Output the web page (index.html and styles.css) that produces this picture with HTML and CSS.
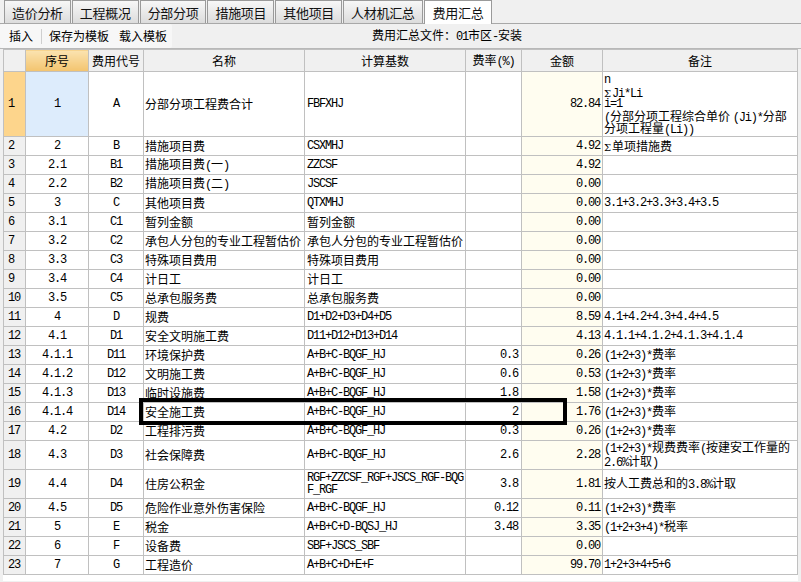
FILE: index.html
```html
<!DOCTYPE html>
<html lang="zh-CN">
<head>
<meta charset="utf-8">
<title>费用汇总</title>
<link rel="stylesheet" href="styles.css">
</head>
<body>
<div class="tabs">
  <div class="tab">造价分析</div>
  <div class="tab">工程概况</div>
  <div class="tab">分部分项</div>
  <div class="tab">措施项目</div>
  <div class="tab">其他项目</div>
  <div class="tab">人材机汇总</div>
  <div class="tab active">费用汇总</div>
</div>
<div class="toolbar">
  <div class="tools">
    <span>插入</span><span class="sep"></span><span>保存为模板</span><span class="gap">载入模板</span>
  </div>
  <div class="file">费用汇总文件：<span class="m">01</span>市区<span class="m">-</span>安装</div>
</div>
<div class="grid">
  <table>
    <colgroup>
      <col class="c0"><col class="c1"><col class="c2"><col class="c3"><col class="c4"><col class="c5"><col class="c6"><col class="c7">
    </colgroup>
    <thead>
      <tr>
        <th class="rh"></th>
        <th class="sel">序号</th>
        <th>费用代号</th>
        <th>名称</th>
        <th>计算基数</th>
        <th>费率<span class="m">(%)</span></th>
        <th>金额</th>
        <th>备注</th>
      </tr>
    </thead>
    <tbody>
      <tr class="r1">
        <td class="rh m cur">1</td><td class="ctr m blue">1</td><td class="ctr m">A</td><td class="nm">分部分项工程费合计</td><td class="fx m">FBFXHJ</td><td class="rt m"></td><td class="amt m">82.84</td>
        <td class="note note1"><div class="ln m">n</div><div class="ln"><span class="sig">Σ</span><span class="m">Ji*Li</span></div><div class="ln m">i=1</div><div class="ln"><span class="m">(</span>分部分项工程综合单价 <span class="m">(Ji)*</span>分部</div><div class="ln">分项工程量<span class="m">(Li))</span></div></td>
      </tr>
      <tr><td class="rh m">2</td><td class="ctr m">2</td><td class="ctr m">B</td><td class="nm">措施项目费</td><td class="fx m">CSXMHJ</td><td class="rt m"></td><td class="amt m">4.92</td><td class="note"><span class="sig">Σ</span>单项措施费</td></tr>
      <tr><td class="rh m">3</td><td class="ctr m">2.1</td><td class="ctr m">B1</td><td class="nm">措施项目费<span class="m">(</span>一<span class="m">)</span></td><td class="fx m">ZZCSF</td><td class="rt m"></td><td class="amt m">4.92</td><td class="note"></td></tr>
      <tr><td class="rh m">4</td><td class="ctr m">2.2</td><td class="ctr m">B2</td><td class="nm">措施项目费<span class="m">(</span>二<span class="m">)</span></td><td class="fx m">JSCSF</td><td class="rt m"></td><td class="amt m">0.00</td><td class="note"></td></tr>
      <tr><td class="rh m">5</td><td class="ctr m">3</td><td class="ctr m">C</td><td class="nm">其他项目费</td><td class="fx m">QTXMHJ</td><td class="rt m"></td><td class="amt m">0.00</td><td class="note m">3.1+3.2+3.3+3.4+3.5</td></tr>
      <tr><td class="rh m">6</td><td class="ctr m">3.1</td><td class="ctr m">C1</td><td class="nm">暂列金额</td><td class="fx">暂列金额</td><td class="rt m"></td><td class="amt m">0.00</td><td class="note"></td></tr>
      <tr><td class="rh m">7</td><td class="ctr m">3.2</td><td class="ctr m">C2</td><td class="nm">承包人分包的专业工程暂估价</td><td class="fx">承包人分包的专业工程暂估价</td><td class="rt m"></td><td class="amt m">0.00</td><td class="note"></td></tr>
      <tr><td class="rh m">8</td><td class="ctr m">3.3</td><td class="ctr m">C3</td><td class="nm">特殊项目费用</td><td class="fx">特殊项目费用</td><td class="rt m"></td><td class="amt m">0.00</td><td class="note"></td></tr>
      <tr><td class="rh m">9</td><td class="ctr m">3.4</td><td class="ctr m">C4</td><td class="nm">计日工</td><td class="fx">计日工</td><td class="rt m"></td><td class="amt m">0.00</td><td class="note"></td></tr>
      <tr><td class="rh m">10</td><td class="ctr m">3.5</td><td class="ctr m">C5</td><td class="nm">总承包服务费</td><td class="fx">总承包服务费</td><td class="rt m"></td><td class="amt m">0.00</td><td class="note"></td></tr>
      <tr><td class="rh m">11</td><td class="ctr m">4</td><td class="ctr m">D</td><td class="nm">规费</td><td class="fx m">D1+D2+D3+D4+D5</td><td class="rt m"></td><td class="amt m">8.59</td><td class="note m">4.1+4.2+4.3+4.4+4.5</td></tr>
      <tr><td class="rh m">12</td><td class="ctr m">4.1</td><td class="ctr m">D1</td><td class="nm">安全文明施工费</td><td class="fx m">D11+D12+D13+D14</td><td class="rt m"></td><td class="amt m">4.13</td><td class="note m">4.1.1+4.1.2+4.1.3+4.1.4</td></tr>
      <tr><td class="rh m">13</td><td class="ctr m">4.1.1</td><td class="ctr m">D11</td><td class="nm">环境保护费</td><td class="fx m">A+B+C-BQGF_HJ</td><td class="rt m">0.3</td><td class="amt m">0.26</td><td class="note"><span class="m">(1+2+3)*</span>费率</td></tr>
      <tr><td class="rh m">14</td><td class="ctr m">4.1.2</td><td class="ctr m">D12</td><td class="nm">文明施工费</td><td class="fx m">A+B+C-BQGF_HJ</td><td class="rt m">0.6</td><td class="amt m">0.53</td><td class="note"><span class="m">(1+2+3)*</span>费率</td></tr>
      <tr><td class="rh m">15</td><td class="ctr m">4.1.3</td><td class="ctr m">D13</td><td class="nm">临时设施费</td><td class="fx m">A+B+C-BQGF_HJ</td><td class="rt m">1.8</td><td class="amt m">1.58</td><td class="note"><span class="m">(1+2+3)*</span>费率</td></tr>
      <tr><td class="rh m">16</td><td class="ctr m">4.1.4</td><td class="ctr m">D14</td><td class="nm">安全施工费</td><td class="fx m">A+B+C-BQGF_HJ</td><td class="rt m">2</td><td class="amt m">1.76</td><td class="note"><span class="m">(1+2+3)*</span>费率</td></tr>
      <tr><td class="rh m">17</td><td class="ctr m">4.2</td><td class="ctr m">D2</td><td class="nm">工程排污费</td><td class="fx m">A+B+C-BQGF_HJ</td><td class="rt m">0.3</td><td class="amt m">0.26</td><td class="note"><span class="m">(1+2+3)*</span>费率</td></tr>
      <tr class="r2"><td class="rh m">18</td><td class="ctr m">4.3</td><td class="ctr m">D3</td><td class="nm">社会保障费</td><td class="fx m">A+B+C-BQGF_HJ</td><td class="rt m">2.6</td><td class="amt m">2.28</td><td class="note two"><span class="m">(1+2+3)*</span>规费费率<span class="m">(</span>按建安工作量的<br><span class="m">2.6%</span>计取<span class="m">)</span></td></tr>
      <tr class="r2"><td class="rh m">19</td><td class="ctr m">4.4</td><td class="ctr m">D4</td><td class="nm">住房公积金</td><td class="fx m two12">RGF+ZZCSF_RGF+JSCS_RGF-BQG<br>F_RGF</td><td class="rt m">3.8</td><td class="amt m">1.81</td><td class="note">按人工费总和的<span class="m">3.8%</span>计取</td></tr>
      <tr><td class="rh m">20</td><td class="ctr m">4.5</td><td class="ctr m">D5</td><td class="nm">危险作业意外伤害保险</td><td class="fx m">A+B+C-BQGF_HJ</td><td class="rt m">0.12</td><td class="amt m">0.11</td><td class="note"><span class="m">(1+2+3)*</span>费率</td></tr>
      <tr><td class="rh m">21</td><td class="ctr m">5</td><td class="ctr m">E</td><td class="nm">税金</td><td class="fx m">A+B+C+D-BQSJ_HJ</td><td class="rt m">3.48</td><td class="amt m">3.35</td><td class="note"><span class="m">(1+2+3+4)*</span>税率</td></tr>
      <tr><td class="rh m">22</td><td class="ctr m">6</td><td class="ctr m">F</td><td class="nm">设备费</td><td class="fx m">SBF+JSCS_SBF</td><td class="rt m"></td><td class="amt m">0.00</td><td class="note"></td></tr>
      <tr><td class="rh m">23</td><td class="ctr m">7</td><td class="ctr m">G</td><td class="nm">工程造价</td><td class="fx m">A+B+C+D+E+F</td><td class="rt m"></td><td class="amt m">99.70</td><td class="note m">1+2+3+4+5+6</td></tr>
    </tbody>
  </table>
  <div class="mark"></div>
</div>
</body>
</html>
```

FILE: styles.css
```css
* { box-sizing: border-box; }
html, body { margin: 0; padding: 0; }
body {
  width: 801px;
  height: 582px;
  overflow: hidden;
  background: #f0f0f0;
  color: #000;
  font-family: "Noto Sans CJK SC", sans-serif;
  font-size: 12px;
  line-height: 1;
}
.m {
  font-family: "Liberation Mono", monospace;
  font-size: 12px;
  letter-spacing: -1.2px;
}
.sig {
  font-family: "DejaVu Serif", serif;
  font-size: 10px;
  margin-right: 1px;
}
.tabs {
  display: flex;
  align-items: flex-end;
  height: 24px;
  padding-left: 4px;
  gap: 1px;
  border-bottom: 1px solid #a8a8a8;
}
.tab {
  height: 23px;
  padding: 0 7px;
  display: flex;
  align-items: center;
  font-size: 13px;
  letter-spacing: -0.3px;
  border: 1px solid #9a9a9a;
  border-bottom: none;
  background: linear-gradient(#f7f7f7, #dcdcdc);
  color: #111;
}
.tab.active {
  background: #fff;
  height: 24px;
  margin-bottom: -1px;
  padding: 0 8px;
}
.toolbar {
  display: flex;
  align-items: center;
  height: 25px;
  border-bottom: 1px solid #b8b8b8;
}
.tools {
  display: flex;
  align-items: center;
  height: 24px;
  width: 172px;
  padding-left: 9px;
  background: #f7f7f7;
  border-radius: 2px;
}
.sep {
  width: 1px;
  height: 15px;
  background: #cfcfcf;
  margin: 0 7px 0 8px;
}
.gap { margin-left: 10px; }
.file { margin-left: 200px; }
.grid {
  position: relative;
  margin-left: 3px;
  width: 795px;
  height: 532px;
  background: #fff;
}
table {
  border-collapse: collapse;
  table-layout: fixed;
  width: 794px;
}
col.c0 { width: 22px; }
col.c1 { width: 63px; }
col.c2 { width: 55px; }
col.c3 { width: 161px; }
col.c4 { width: 161px; }
col.c5 { width: 56px; }
col.c6 { width: 81px; }
col.c7 { width: 195px; }
th, td {
  border: 1px solid #c0c0c0;
  padding: 0;
  white-space: nowrap;
  overflow: hidden;
  vertical-align: middle;
}
th {
  height: 22px;
  font-weight: normal;
  text-align: center;
  background: #f0f0f0;
}
th.sel { background: linear-gradient(#fbe3b0, #f3c46e); }
td { height: 19px; }
tr.r1 td { height: 65px; }
tr.r2 td { height: 29px; }
td.rh { background: #f0f0f0; padding-left: 4px; }
td.rh.cur { background: #fdd58c; }
td.blue { background: #ddecfc; }
.ctr { text-align: center; }
.nm { padding-left: 1px; }
.fx { padding-left: 2px; }
.rt { text-align: right; padding-right: 3px; }
.amt { text-align: right; padding-right: 2px; background: #fffdf0; }
.note { padding-left: 1px; }
.note1 { vertical-align: top; padding-top: 2px; }
.ln { height: 12px; line-height: 12px; }
.two { line-height: 11px; overflow: visible; }
.two12 { line-height: 12px; }
.mark {
  position: absolute;
  left: 136px;
  top: 349px;
  width: 428px;
  height: 27px;
  border: 4px solid #000;
}
```
